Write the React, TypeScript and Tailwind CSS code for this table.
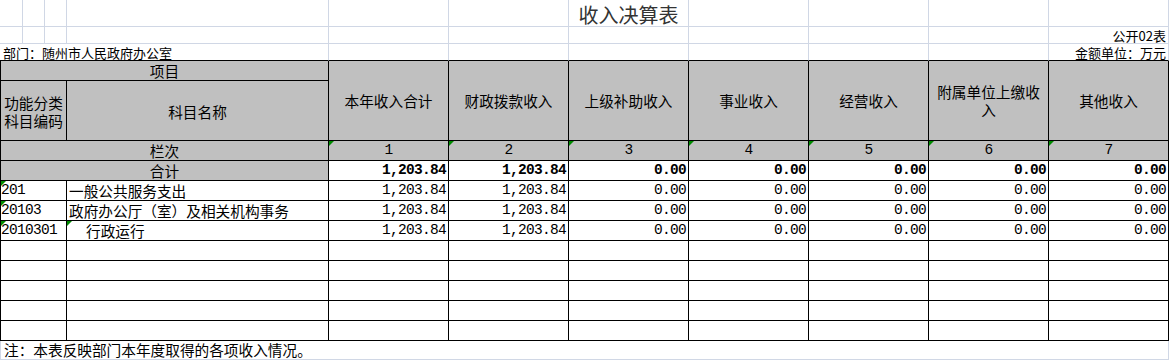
import React from "react";

const CJK = "font-['Noto_Sans_CJK_SC','Noto_Sans',sans-serif]";
const MONO = "font-['Liberation_Mono','DejaVu_Sans_Mono',monospace] text-[14.5px] tracking-[-0.7px]";

const G = "border-[#d0d7e5]";

function Tri() {
  return (
    <span className="absolute left-0 top-0 h-0 w-0 border-t-[5px] border-r-[5px] border-t-[#008a00] border-r-transparent" />
  );
}

const dataRows = [
  { code: "201", name: "一般公共服务支出", indent: false, v: ["1,203.84", "1,203.84", "0.00", "0.00", "0.00", "0.00", "0.00"] },
  { code: "20103", name: "政府办公厅（室）及相关机构事务", indent: false, v: ["1,203.84", "1,203.84", "0.00", "0.00", "0.00", "0.00", "0.00"] },
  { code: "2010301", name: "行政运行", indent: true, v: ["1,203.84", "1,203.84", "0.00", "0.00", "0.00", "0.00", "0.00"] },
];

const heads = [["本年收入合计"], ["财政拨款收入"], ["上级补助收入"], ["事业收入"], ["经营收入"], ["附属单位上缴收", "入"], ["其他收入"]];
const totals = ["1,203.84", "1,203.84", "0.00", "0.00", "0.00", "0.00", "0.00"];

export default function App() {
  const blk = "border-black";
  return (
    <div className={`w-[1169px] h-[361px] bg-white text-black ${CJK} overflow-hidden`}>
      <div className="grid grid-cols-[23px_22px_22px_262px_120px_120px_120px_120px_120px_120px_120px] grid-rows-[27px_17px_17px_20px_60px_20px_20px_20px_20px_20px_20px_20px_20px_20px_20px_19px]">
        {/* Row 1: title */}
        {Array.from({ length: 11 }).map((_, i) => (
          <div key={"r1" + i} className={`border-r border-b ${G} flex items-end justify-center`}>
            {i === 6 && (
              <span className="text-[20px] leading-[22px] text-[#333] whitespace-nowrap">收入决算表</span>
            )}
          </div>
        ))}
        {/* Row 2 */}
        {Array.from({ length: 11 }).map((_, i) => (
          <div key={"r2" + i} className={`border-r border-b ${G} flex items-end justify-end pr-[2px]`}>
            {i === 10 && <span className="text-[13px] leading-[15px] whitespace-nowrap">公开02表</span>}
          </div>
        ))}
        {/* Row 3 */}
        <div className={`col-span-4 border-r border-b ${G} border-b-black flex items-end pl-[3px]`}>
          <span className="text-[13px] leading-[15px] whitespace-nowrap">部门：随州市人民政府办公室</span>
        </div>
        {Array.from({ length: 7 }).map((_, i) => (
          <div key={"r3" + i} className={`border-r border-b ${G} border-b-black flex items-end justify-end pr-[2px]`}>
            {i === 6 && <span className="text-[13px] leading-[15px] whitespace-nowrap">金额单位：万元</span>}
          </div>
        ))}
        {/* Header row 1 */}
        <div className={`col-span-4 border-l border-r border-b ${blk} bg-[#c0c0c0] flex items-center justify-center text-[14.67px]`}>
          项目
        </div>
        {heads.map((h, i) => (
          <div
            key={"h" + i}
            className={`row-span-2 border-r border-b ${blk} bg-[#c0c0c0] flex flex-col items-center justify-center text-center text-[14.67px]`}
          >
            {h.map((line) => (
              <span key={line} className="block leading-[18px] whitespace-nowrap">
                {line}
              </span>
            ))}
          </div>
        ))}
        {/* Header row 2 */}
        <div className={`col-span-3 border-l border-r border-b ${blk} bg-[#c0c0c0] flex flex-col items-center justify-center text-center text-[14.67px] pt-[3px]`}>
          <span className="block leading-[18px] whitespace-nowrap">功能分类</span>
          <span className="block leading-[18px] whitespace-nowrap">科目编码</span>
        </div>
        <div className={`border-r border-b ${blk} bg-[#c0c0c0] flex items-center justify-center text-[14.67px] pt-[3px]`}>
          科目名称
        </div>
        {/* 栏次 */}
        <div className={`col-span-4 border-l border-r border-b ${blk} bg-[#c0c0c0] flex items-center justify-center text-[14.67px]`}>
          栏次
        </div>
        {[1, 2, 3, 4, 5, 6, 7].map((n) => (
          <div key={"n" + n} className={`relative border-r border-b ${blk} bg-[#c0c0c0] flex items-center justify-center ${MONO}`}>
            <Tri />
            {n}
          </div>
        ))}
        {/* 合计 */}
        <div className={`col-span-4 border-l border-r border-b ${blk} bg-[#c0c0c0] flex items-center justify-center text-[14.67px]`}>
          合计
        </div>
        {totals.map((t, i) => (
          <div key={"t" + i} className={`border-r border-b ${blk} flex items-center justify-end pr-[2px] ${MONO} font-bold`}>
            {t}
          </div>
        ))}
        {/* data rows */}
        {dataRows.map((r) => (
          <React.Fragment key={r.code}>
            <div className={`relative col-span-3 border-l border-r border-b ${blk} flex items-center ${MONO} pt-[1px]`}>
              <Tri />
              {r.code}
            </div>
            <div className={`relative border-r border-b ${blk} flex items-center text-[14.67px] whitespace-nowrap ${r.indent ? "pl-[19px]" : "pl-[2px]"}`}>
              {r.indent && <Tri />}
              {r.name}
            </div>
            {r.v.map((v, i) => (
              <div key={i} className={`border-r border-b ${blk} flex items-center justify-end pr-[2px] ${MONO} pt-[1px]`}>
                {v}
              </div>
            ))}
          </React.Fragment>
        ))}
        {/* empty rows */}
        {Array.from({ length: 5 }).map((_, r) => (
          <React.Fragment key={"e" + r}>
            <div className={`col-span-3 border-l border-r border-b ${blk}`} />
            <div className={`border-r border-b ${blk}`} />
            {Array.from({ length: 7 }).map((_, i) => (
              <div key={i} className={`border-r border-b ${blk}`} />
            ))}
          </React.Fragment>
        ))}
        {/* note row */}
        <div className={`col-span-11 border-l border-r border-b ${G} flex items-center pl-[3px] text-[14.67px] whitespace-nowrap`}>
          注：本表反映部门本年度取得的各项收入情况。
        </div>
      </div>
    </div>
  );
}
